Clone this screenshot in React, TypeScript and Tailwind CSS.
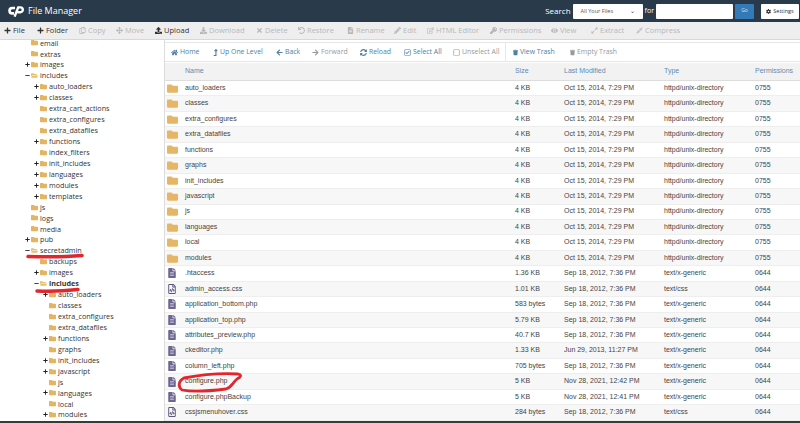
import React from 'react';
import { FaPlus, FaRegCopy, FaArrowsAlt, FaUpload, FaDownload, FaTimes, FaUndo, FaFileAlt, FaPencilAlt, FaRegEdit, FaKey, FaEye, FaExpandAlt, FaCompressAlt, FaHome, FaLevelUpAlt, FaArrowLeft, FaArrowRight, FaSyncAlt, FaRegCheckSquare, FaRegSquare, FaTrash, FaFolder, FaFolderOpen, FaRegFileCode, FaCog, FaMinus } from 'react-icons/fa';

type Tool = { icon: React.ElementType; label: string; w: number; on?: boolean };
const tools: Tool[] = [
  { icon: FaPlus, label: 'File', w: 33, on: true },
  { icon: FaPlus, label: 'Folder', w: 42, on: true },
  { icon: FaRegCopy, label: 'Copy', w: 37 },
  { icon: FaArrowsAlt, label: 'Move', w: 39 },
  { icon: FaUpload, label: 'Upload', w: 45, on: true },
  { icon: FaDownload, label: 'Download', w: 56 },
  { icon: FaTimes, label: 'Delete', w: 42 },
  { icon: FaUndo, label: 'Restore', w: 49 },
  { icon: FaFileAlt, label: 'Rename', w: 47 },
  { icon: FaPencilAlt, label: 'Edit', w: 33 },
  { icon: FaRegEdit, label: 'HTML Editor', w: 63 },
  { icon: FaKey, label: 'Permissions', w: 61 },
  { icon: FaEye, label: 'View', w: 40 },
  { icon: FaExpandAlt, label: 'Extract', w: 45 },
  { icon: FaCompressAlt, label: 'Compress', w: 50 },
];

type Nav = { icon: React.ElementType; label: string; w: number; off?: boolean; sep?: boolean; thin?: boolean };
const navs: Nav[] = [
  { icon: FaHome, label: 'Home', w: 42 },
  { icon: FaLevelUpAlt, label: 'Up One Level', w: 63, thin: true },
  { icon: FaArrowLeft, label: 'Back', w: 36 },
  { icon: FaArrowRight, label: 'Forward', w: 48, off: true },
  { icon: FaSyncAlt, label: 'Reload', w: 44 },
  { icon: FaRegCheckSquare, label: 'Select All', w: 49 },
  { icon: FaRegSquare, label: 'Unselect All', w: 53, off: true, sep: true },
  { icon: FaTrash, label: 'View Trash', w: 57, thin: true },
  { icon: FaTrash, label: 'Empty Trash', w: 60, off: true, thin: true },
];

type T = { n: string; d: number; s?: 'p' | 'm'; open?: boolean; bold?: boolean };
const tree: T[] = [
  { n: 'email', d: 1 }, { n: 'extras', d: 1 }, { n: 'images', d: 1, s: 'p' }, { n: 'includes', d: 1, s: 'm', open: true },
  { n: 'auto_loaders', d: 2, s: 'p' }, { n: 'classes', d: 2, s: 'p' }, { n: 'extra_cart_actions', d: 2 }, { n: 'extra_configures', d: 2 }, { n: 'extra_datafiles', d: 2 },
  { n: 'functions', d: 2, s: 'p' }, { n: 'index_filters', d: 2 }, { n: 'init_includes', d: 2, s: 'p' }, { n: 'languages', d: 2, s: 'p' }, { n: 'modules', d: 2, s: 'p' }, { n: 'templates', d: 2, s: 'p' },
  { n: 'js', d: 1 }, { n: 'logs', d: 1 }, { n: 'media', d: 1 }, { n: 'pub', d: 1, s: 'p' }, { n: 'secretadmin', d: 1, s: 'm', open: true },
  { n: 'backups', d: 2 }, { n: 'images', d: 2, s: 'p' }, { n: 'includes', d: 2, s: 'm', open: true, bold: true },
  { n: 'auto_loaders', d: 3, s: 'p' }, { n: 'classes', d: 3 }, { n: 'extra_configures', d: 3 }, { n: 'extra_datafiles', d: 3 }, { n: 'functions', d: 3, s: 'p' }, { n: 'graphs', d: 3 },
  { n: 'init_includes', d: 3, s: 'p' }, { n: 'javascript', d: 3, s: 'p' }, { n: 'js', d: 3 }, { n: 'languages', d: 3, s: 'p' }, { n: 'local', d: 3 }, { n: 'modules', d: 3, s: 'p' },
];

const dir = (n: string) => ({ n, k: 'd', size: '4 KB', date: 'Oct 15, 2014, 7:29 PM', type: 'httpd/unix-directory', perm: '0755' });
const f = (n: string, k: string, size: string, date: string, type: string) => ({ n, k, size, date, type, perm: '0644' });
const S = 'Sep 18, 2012, 7:36 PM';
const rows = [
  ...['auto_loaders', 'classes', 'extra_configures', 'extra_datafiles', 'functions', 'graphs', 'init_includes', 'javascript', 'js', 'languages', 'local', 'modules'].map(dir),
  f('.htaccess', 't', '1.36 KB', S, 'text/x-generic'),
  f('admin_access.css', 'c', '1.01 KB', S, 'text/css'),
  f('application_bottom.php', 't', '583 bytes', S, 'text/x-generic'),
  f('application_top.php', 't', '5.79 KB', S, 'text/x-generic'),
  f('attributes_preview.php', 't', '40.7 KB', S, 'text/x-generic'),
  f('ckeditor.php', 't', '1.33 KB', 'Jun 29, 2013, 11:27 PM', 'text/x-generic'),
  f('column_left.php', 't', '705 bytes', S, 'text/x-generic'),
  f('configure.php', 't', '5 KB', 'Nov 28, 2021, 12:42 PM', 'text/x-generic'),
  f('configure.phpBackup', 't', '5 KB', 'Nov 28, 2021, 12:41 PM', 'text/x-generic'),
  f('cssjsmenuhover.css', 'c', '284 bytes', S, 'text/css'),
];

const cols = 'grid grid-cols-[20px_330px_49px_100px_91px_1fr]';

export default function App() {
  return (
    <div className="relative w-[800px] h-[423px] overflow-hidden bg-white flex flex-col font-['Open_Sans',sans-serif]">
      <header className="h-[22px] shrink-0 bg-[#293a4a] flex items-center text-white">
        <svg viewBox="0 0 16 11" className="w-[16px] h-[11px] ml-[8px] mr-[4px]" fill="none" stroke="#fff" aria-hidden="true">
          <path d="M7 2 H4.2 a2.6 2.6 0 0 0 0 5.4 H6" strokeWidth="2.6" />
          <path d="M6.6 10.6 L10.2 1.4 H12.4 a2.4 2.4 0 0 1 0 4.8 H9.4" strokeWidth="2.4" />
        </svg>
        <span className="text-[9px]">File Manager</span>
        <div className="ml-auto flex items-center">
          <span className="text-[8px] mr-[2px]">Search</span>
          <div className="w-[70px] h-[15px] bg-white rounded-[1px] flex items-center justify-between px-[8px] text-[#555] text-[5.5px]">
            <span>All Your Files</span>
            <span className="text-[#333] text-[6px]">⌄</span>
          </div>
          <span className="text-[7px] mx-[2px]">for</span>
          <div className="w-[77px] h-[15px] bg-white rounded-[1px]" />
          <div className="w-[19px] h-[15px] ml-[2px] bg-[#337ab7] rounded-[1px] flex items-center justify-center text-[5px] text-[#cfe0ef]">Go</div>
          <div className="w-[38px] h-[15px] ml-[7px] mr-[1px] bg-white rounded-[1px] flex items-center justify-center gap-[2px] text-[#333] text-[5.5px]">
            <FaCog className="w-[5px] h-[5px]" />Settings
          </div>
        </div>
      </header>

      <div className="h-[18px] shrink-0 bg-[#eeeeee] border-b border-[#d8d8d8] flex items-center pl-[4px] text-[7.5px] whitespace-nowrap">
        {tools.map((t, i) => (
          <div key={i} style={{ width: t.w }} className={`shrink-0 flex items-center gap-[2px] ${t.on ? 'text-[#333] font-medium' : 'text-[#b8b8b8]'}`}>
            <t.icon className="w-[7px] h-[7px] shrink-0" />
            <span>{t.label}</span>
          </div>
        ))}
      </div>

      <div className="flex-1 min-h-0 flex">
        <aside className="w-[164px] shrink-0 -mt-[2.5px] overflow-hidden text-[7.2px] text-[#333]">
          {tree.map((t, i) => (
            <div key={i} className={`h-[10.95px] flex items-center whitespace-nowrap ${t.d === 1 ? 'pl-[25px]' : t.d === 2 ? 'pl-[34px]' : 'pl-[43px]'} ${t.bold ? 'font-bold' : ''}`}>
              <span className="w-[6px] shrink-0 flex items-center">
                {t.s === 'p' && <FaPlus className="w-[5px] h-[5px] text-[#222]" />}
                {t.s === 'm' && <FaMinus className="w-[5px] h-[5px] text-[#444]" />}
              </span>
              {t.open ? <FaFolderOpen className="w-[7px] h-[7px] text-[#e8c06c] shrink-0 mr-[2px]" /> : <FaFolder className="w-[7px] h-[7px] text-[#e3b563] shrink-0 mr-[2px]" />}
              <span>{t.n}</span>
            </div>
          ))}
        </aside>

        <main className="flex-1 min-w-0 overflow-hidden border-l border-[#dcdcdc]">
          <div className="h-[20px] mt-[2px] border-y border-[#e6e6e6] flex items-center pl-[6px] text-[6.9px] text-[#4a7fa8] whitespace-nowrap">
            {navs.map((n, i) => (
              <div key={i} style={{ width: n.w }} className={`shrink-0 h-full flex items-center gap-[2px] ${n.off ? 'text-[#999]' : ''} ${n.sep ? 'border-r border-[#e8e8e8] mr-[7px]' : ''}`}>
                <n.icon className={`${n.thin ? 'w-[5px]' : 'w-[7px]'} h-[7px] shrink-0`} />
                <span>{n.label}</span>
              </div>
            ))}
          </div>
          <div className={`${cols} h-[18px] mt-[1px] bg-[#f2f2f2] border-b border-[#dddddd] items-center text-[7px] text-[#5c8db5] font-['Liberation_Sans',sans-serif]`}>
            <span /><span>Name</span><span>Size</span><span>Last Modified</span><span>Type</span><span>Permissions</span>
          </div>
          <div className="font-['Liberation_Sans',sans-serif] text-[7px] text-[#444]">
            {rows.map((r, i) => (
              <div key={i} className={`${cols} h-[15.45px] items-center border-b border-[#eeeeee] ${i % 2 ? 'bg-[#f7f7f7]' : 'bg-white'}`}>
                <span className="pl-[2px] flex items-center">
                  {r.k === 'd' && <FaFolder className="w-[11px] h-[11px] text-[#e6b566]" />}
                  {r.k === 't' && <FaFileAlt className="w-[8px] h-[10px] ml-[1px] text-[#6e6591]" />}
                  {r.k === 'c' && <FaRegFileCode className="w-[8px] h-[10px] ml-[1px] text-[#5c5480]" />}
                </span>
                <span>{r.n}</span><span>{r.size}</span><span>{r.date}</span><span>{r.type}</span><span>{r.perm}</span>
              </div>
            ))}
          </div>
        </main>
      </div>
      <div className="h-[2px] shrink-0 bg-[#3a3a3a]" />

      <svg className="absolute inset-0 w-[800px] h-[423px] pointer-events-none" viewBox="0 0 800 423" fill="none" aria-hidden="true">
        <path d="M28 256.5 C45 257 65 257 82 255.5" stroke="#e3262e" strokeWidth="3.5" strokeLinecap="round" />
        <path d="M37 291 C50 291.5 65 291 78 289.5" stroke="#e3262e" strokeWidth="3.5" strokeLinecap="round" />
        <path d="M184 378 C200 375 222 373 238 374 C242 375 241 377 237 379 C233 382 232 387 226 389 C210 391 192 392 182 390 C178 387 178 381 184 378z" stroke="#e3262e" strokeWidth="2.8" strokeLinecap="round" />
      </svg>
    </div>
  );
}
